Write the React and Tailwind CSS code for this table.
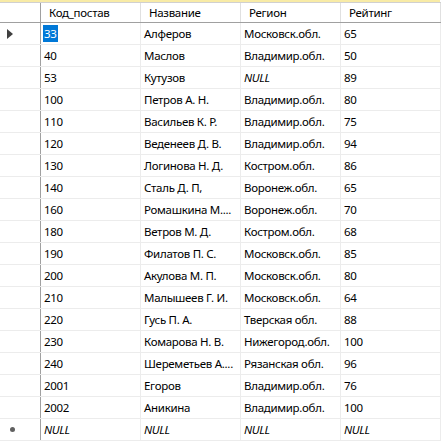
import React from "react";

const rows = [
  ["33", "Алферов", "Московск.обл.", "65"],
  ["40", "Маслов", "Владимир.обл.", "50"],
  ["53", "Кутузов", null, "89"],
  ["100", "Петров А. Н.", "Владимир.обл.", "80"],
  ["110", "Васильев К. Р.", "Владимир.обл.", "75"],
  ["120", "Веденеев Д. В.", "Владимир.обл.", "94"],
  ["130", "Логинова Н. Д.", "Костром.обл.", "86"],
  ["140", "Сталь Д. П,", "Воронеж.обл.", "65"],
  ["160", "Ромашкина М....", "Воронеж.обл.", "70"],
  ["180", "Ветров М. Д.", "Костром.обл.", "68"],
  ["190", "Филатов П. С.", "Московск.обл.", "85"],
  ["200", "Акулова М. П.", "Московск.обл.", "80"],
  ["210", "Малышеев Г. И.", "Московск.обл.", "64"],
  ["220", "Гусь П. А.", "Тверская обл.", "88"],
  ["230", "Комарова Н. В.", "Нижегород.обл.", "100"],
  ["240", "Шереметьев А....", "Рязанская обл.", "96"],
  ["2001", "Егоров", "Владимир.обл.", "76"],
  ["2002", "Аникина", "Владимир.обл.", "100"],
];

const headers = ["Код_постав", "Название", "Регион", "Рейтинг"];

const Cell = ({ children, italic, selected }) => (
  <div className="w-[100px] shrink-0 border-r border-[#ececec] pl-[3px] flex items-center overflow-hidden whitespace-nowrap">
    {children === null || italic ? (
      <span className="italic">NULL</span>
    ) : selected ? (
      <span className="bg-[#0078d7] text-white px-[1px] -ml-[1px]">{children}</span>
    ) : (
      children
    )}
  </div>
);

export default function App() {
  return (
    <div
      className="w-[447px] h-[442px] bg-white overflow-hidden text-[11.5px] tracking-[-0.3px] text-black"
      style={{ fontFamily: '"Segoe UI", "Noto Sans", "Open Sans", sans-serif' }}
    >
      <div className="h-[2px] bg-[#f8eba6] w-[440px]" />
      <div className="flex h-[21px] border-t border-b border-[#a0a0a0] border-t-[#d0d0d0] w-[441px]">
        <div className="w-[41px] shrink-0 border-r border-[#a0a0a0]" />
        {headers.map((h) => (
          <div key={h} className="w-[100px] shrink-0 border-r border-[#e0e0e0] pl-[8px] flex items-center">
            {h}
          </div>
        ))}
      </div>
      {rows.map((r, i) => (
        <div key={r[0]} className="flex h-[22px] border-b border-[#ececec] w-[441px]">
          <div className="w-[41px] shrink-0 border-r border-[#a0a0a0] flex items-center pl-[7px]">
            {i === 0 && (
              <svg width="6" height="10" viewBox="0 0 6 10">
                <path d="M0 0 L6 5 L0 10 Z" fill="#404040" />
              </svg>
            )}
          </div>
          <Cell selected={i === 0}>{r[0]}</Cell>
          <Cell>{r[1]}</Cell>
          <Cell>{r[2]}</Cell>
          <Cell>{r[3]}</Cell>
        </div>
      ))}
      <div className="flex h-[22px] border-b border-[#ececec] w-[441px]">
        <div className="w-[41px] shrink-0 border-r border-[#a0a0a0] flex items-center pl-[10px]">
          <div className="w-[5px] h-[5px] rounded-full bg-[#606060]" />
        </div>
        <Cell italic>x</Cell>
        <Cell italic>x</Cell>
        <Cell italic>x</Cell>
        <Cell italic>x</Cell>
      </div>
    </div>
  );
}
